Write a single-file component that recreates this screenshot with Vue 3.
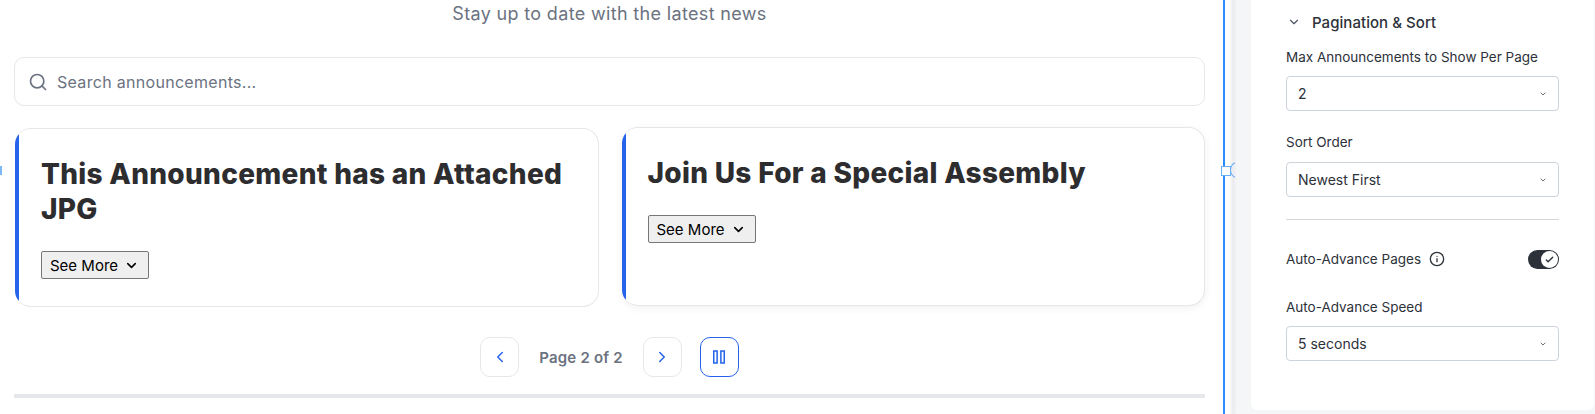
<template>
  <div class="page">
    <main class="preview">
      <p class="subtitle">Stay up to date with the latest news</p>
      <div class="search">
        <svg class="search-icon" viewBox="0 0 24 24" width="20" height="20" fill="none" stroke="#6b7280" stroke-width="2" stroke-linecap="round"><circle cx="11" cy="11" r="8" /><path d="M21 21l-4.3-4.3" /></svg>
        <span>Search announcements...</span>
      </div>
      <div class="cards">
        <article v-for="card in cards" :key="card.title" class="card" :class="{ lifted: card.lifted }">
          <h2>{{ card.title }}</h2>
          <button class="more">
            See More
            <svg viewBox="0 0 24 24" width="15" height="15" fill="none" stroke="#000" stroke-width="2.5" stroke-linecap="round" stroke-linejoin="round"><path d="M6 9l6 6 6-6" /></svg>
          </button>
        </article>
      </div>
      <div class="pager">
        <button class="page-btn">
          <svg viewBox="0 0 24 24" width="18" height="18" fill="none" stroke="#2563eb" stroke-width="2" stroke-linecap="round" stroke-linejoin="round"><path d="M15 18l-6-6 6-6" /></svg>
        </button>
        <span class="page-text">Page 2 of 2</span>
        <button class="page-btn">
          <svg viewBox="0 0 24 24" width="18" height="18" fill="none" stroke="#2563eb" stroke-width="2" stroke-linecap="round" stroke-linejoin="round"><path d="M9 18l6-6-6-6" /></svg>
        </button>
        <button class="page-btn pause">
          <svg viewBox="0 0 24 24" width="18" height="18" fill="none" stroke="#2563eb" stroke-width="2"><rect x="5" y="4" width="4.5" height="16" /><rect x="14.5" y="4" width="4.5" height="16" /></svg>
        </button>
      </div>
      <div class="rule"></div>
      <span class="edge-tick"></span>
    </main>

    <div class="handle-line">
      <span class="handle-square"></span>
      <span class="handle-arc"></span>
    </div>

    <div class="strip">
      <aside class="panel">
        <div class="section-head">
          <svg viewBox="0 0 24 24" width="14" height="14" fill="none" stroke="#4b5563" stroke-width="2" stroke-linecap="round" stroke-linejoin="round"><path d="M6 9l6 6 6-6" /></svg>
          <span>Pagination &amp; Sort</span>
        </div>

        <label class="field-label first">Max Announcements to Show Per Page</label>
        <div class="select">
          <span>2</span>
          <svg viewBox="0 0 24 24" width="8" height="8" fill="none" stroke="#6b7280" stroke-width="3" stroke-linecap="round" stroke-linejoin="round"><path d="M6 9l6 6 6-6" /></svg>
        </div>

        <label class="field-label">Sort Order</label>
        <div class="select">
          <span>Newest First</span>
          <svg viewBox="0 0 24 24" width="8" height="8" fill="none" stroke="#6b7280" stroke-width="3" stroke-linecap="round" stroke-linejoin="round"><path d="M6 9l6 6 6-6" /></svg>
        </div>

        <div class="divider"></div>

        <div class="toggle-row">
          <span class="toggle-label">
            Auto-Advance Pages
            <svg viewBox="0 0 24 24" width="16" height="16" fill="none" stroke="#2d3139" stroke-width="2" stroke-linecap="round"><circle cx="12" cy="12" r="10" /><path d="M12 16v-4.5M12 8h.01" /></svg>
          </span>
          <span class="toggle">
            <span class="knob">
              <svg viewBox="0 0 24 24" width="11" height="11" fill="none" stroke="#2d3139" stroke-width="3" stroke-linecap="round" stroke-linejoin="round"><path d="M5 13l4 4 10-10" /></svg>
            </span>
          </span>
        </div>

        <label class="field-label speed">Auto-Advance Speed</label>
        <div class="select">
          <span>5 seconds</span>
          <svg viewBox="0 0 24 24" width="8" height="8" fill="none" stroke="#6b7280" stroke-width="3" stroke-linecap="round" stroke-linejoin="round"><path d="M6 9l6 6 6-6" /></svg>
        </div>
      </aside>
    </div>
  </div>
</template>

<script setup>
const cards = [
  { title: "This Announcement has an Attached JPG", lifted: false },
  { title: "Join Us For a Special Assembly", lifted: true },
];
</script>

<style>
html,
body {
  margin: 0;
  background: #fff;
}
</style>

<style scoped>
.page {
  display: flex;
  width: 1595px;
  height: 414px;
  overflow: hidden;
  font-family: Inter, "Liberation Sans", sans-serif;
  color: #2d3139;
}
.preview {
  position: relative;
  width: 1223px;
  flex: none;
  box-sizing: border-box;
  padding: 0 18px 0 14px;
}
.subtitle {
  margin: 0;
  padding-top: 2px;
  height: 57px;
  box-sizing: border-box;
  text-align: center;
  font-size: 18px;
  letter-spacing: 0.34px;
  line-height: 24px;
  color: #6b7280;
}
.search {
  display: flex;
  align-items: center;
  gap: 9px;
  height: 49px;
  box-sizing: border-box;
  padding-left: 13px;
  border: 1px solid #e5e7eb;
  border-radius: 10px;
  font-size: 16px;
  letter-spacing: 0.3px;
  color: #6b7280;
}
.cards {
  display: grid;
  grid-template-columns: 1fr 1fr;
  gap: 23px;
  margin: 22px 0 0 1px;
}
.card {
  position: relative;
  overflow: hidden;
  height: 179px;
  box-sizing: border-box;
  padding: 28px 22px 0 26px;
  background: #fff;
  border: 1px solid #e5e7eb;
  border-left: none;
  border-radius: 16px;
}
.card::before {
  content: "";
  position: absolute;
  left: 0;
  top: 0;
  bottom: 0;
  width: 4px;
  background: #2563eb;
}
.card.lifted {
  transform: translateY(-1px);
  box-shadow: 0 2px 8px rgba(0, 0, 0, 0.06);
}
.card h2 {
  margin: 0 0 24px;
  font-size: 28px;
  line-height: 35px;
  font-weight: 800;
  letter-spacing: 0.3px;
  color: #2d2d2f;
}
.more {
  display: inline-flex;
  align-items: center;
  gap: 6px;
  height: 28px;
  padding: 0 9px 0 8px;
  background: #efefef;
  border: 1px solid #767676;
  border-radius: 2px;
  font-family: inherit;
  font-size: 15px;
  color: #000;
}
.pager {
  display: flex;
  justify-content: center;
  align-items: center;
  margin-top: 30px;
  gap: 20px;
}
.page-btn {
  display: flex;
  align-items: center;
  justify-content: center;
  width: 39px;
  height: 40px;
  padding: 0;
  background: #fff;
  border: 1px solid #e5e7eb;
  border-radius: 10px;
}
.pause {
  margin-left: -2px;
  border-color: #2563eb;
}
.page-text {
  font-size: 15px;
  font-weight: 600;
  letter-spacing: 0.2px;
  color: #6b7280;
}
.rule {
  height: 4px;
  margin-top: 17px;
  background: #e5e7eb;
}
.edge-tick {
  position: absolute;
  left: 0;
  top: 166px;
  width: 2px;
  height: 9px;
  background: #7db8f5;
}
.handle-line {
  position: relative;
  flex: none;
  width: 2px;
  background: #2b8cff;
}
.handle-square {
  position: absolute;
  left: -2px;
  top: 166px;
  width: 8px;
  height: 8px;
  background: #fff;
  border: 1px solid #6aaef8;
}
.handle-arc {
  position: absolute;
  left: 7px;
  top: 162px;
  width: 14px;
  height: 16px;
  box-sizing: border-box;
  border: 1px solid #6aaef8;
  border-radius: 50%;
  clip-path: inset(0 9px 0 0);
}
.strip {
  flex: 1;
  padding-left: 26px;
  padding-right: 1px;
  background: linear-gradient(90deg, #fff 0, #fff 4px, #ebebed 8px, #f5f6f8 12px);
}
.panel {
  height: 410px;
  box-sizing: border-box;
  padding: 12px 35px 0 35px;
  background: #fff;
  border-radius: 0 0 6px 6px;
  font-size: 13.5px;
}
.section-head {
  display: flex;
  align-items: center;
  gap: 11px;
  margin-left: 1px;
  height: 20px;
  font-weight: 500;
  font-size: 15px;
  letter-spacing: 0.05px;
}
.field-label {
  display: block;
  line-height: 20px;
  margin-top: 21px;
  margin-bottom: 10px;
}
.field-label.first {
  margin-top: 15px;
  margin-bottom: 9px;
}
.select {
  display: flex;
  align-items: center;
  justify-content: space-between;
  height: 35px;
  box-sizing: border-box;
  padding: 0 11px;
  border: 1px solid #cdd3da;
  border-radius: 4px;
  font-size: 14px;
}
.divider {
  height: 1px;
  margin-top: 22px;
  background: #d4d6da;
}
.toggle-row {
  display: flex;
  align-items: center;
  justify-content: space-between;
  margin-top: 29px;
  height: 20px;
}
.toggle-label {
  display: flex;
  align-items: center;
  gap: 8px;
}
.toggle {
  display: flex;
  justify-content: flex-end;
  align-items: center;
  width: 31px;
  height: 19px;
  box-sizing: border-box;
  padding-right: 1px;
  background: #2d3139;
  border-radius: 10px;
}
.knob {
  display: flex;
  align-items: center;
  justify-content: center;
  width: 17px;
  height: 17px;
  background: #fff;
  border-radius: 50%;
}
.field-label.speed {
  margin-top: 28px;
  margin-bottom: 9px;
}
</style>
